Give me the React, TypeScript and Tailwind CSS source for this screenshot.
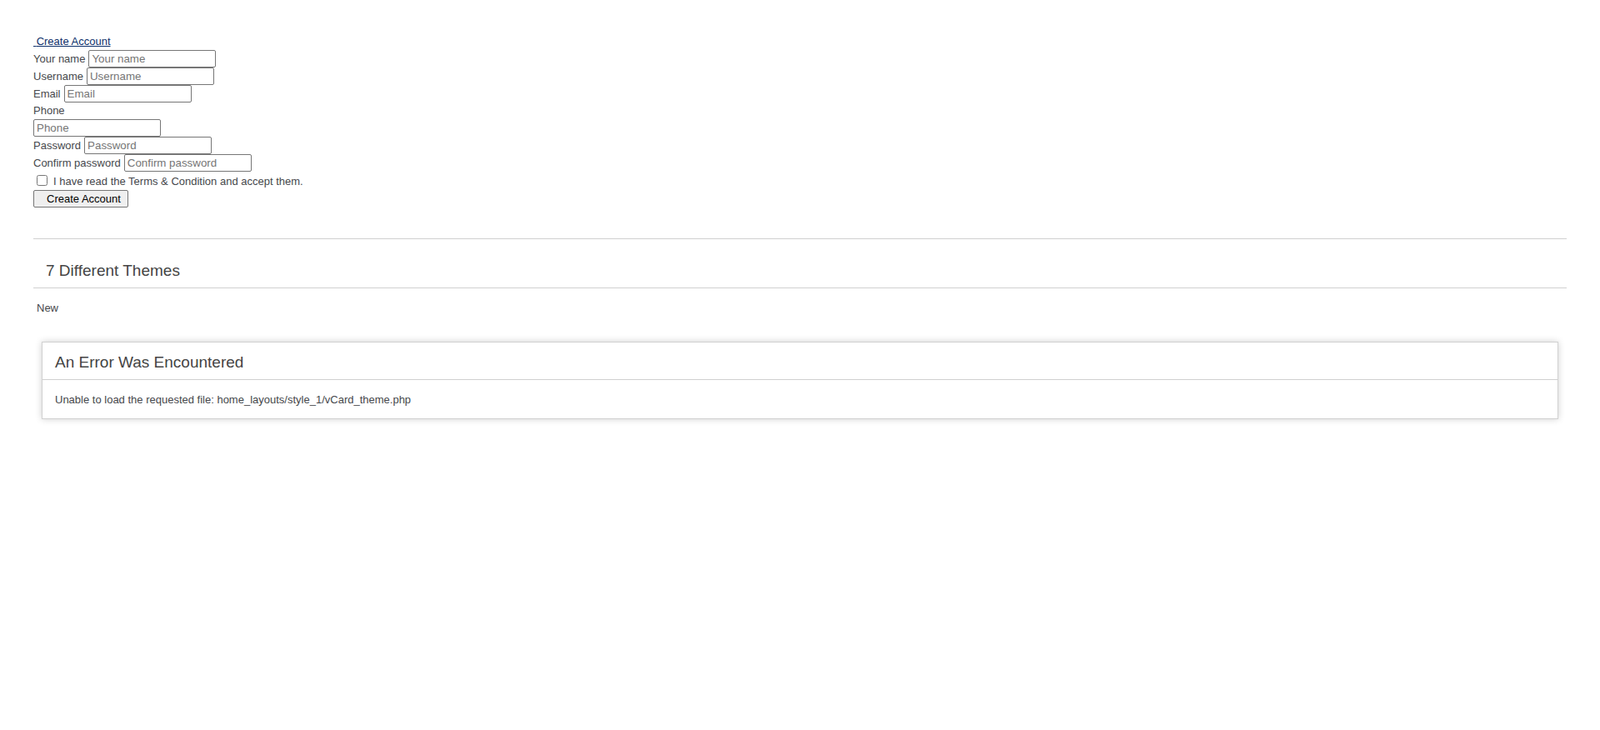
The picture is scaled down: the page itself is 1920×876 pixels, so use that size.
import React from "react";

interface FieldProps {
  label: string;
  stacked?: boolean;
}

const inputCls =
  "h-[21px] w-[153px] rounded-[2px] border border-[#767676] bg-white px-[3px] text-[13.33px] leading-[15px] text-black placeholder:text-[#757575] outline-none";

const Field: React.FC<FieldProps> = ({ label, stacked }) => {
  if (stacked) {
    return (
      <div>
        <div className="h-[20px]">
          <label>{label}</label>
        </div>
        <div className="flex h-[21px] items-center">
          <input type="text" placeholder={label} className={inputCls} />
        </div>
      </div>
    );
  }
  return (
    <div className="flex h-[21px] items-center gap-[4px]">
      <label>{label}</label>
      <input type="text" placeholder={label} className={inputCls} />
    </div>
  );
};

const fields: FieldProps[] = [
  { label: "Your name" },
  { label: "Username" },
  { label: "Email" },
  { label: "Phone", stacked: true },
  { label: "Password" },
  { label: "Confirm password" },
];

export default function App() {
  return (
    <div className="min-h-screen bg-white p-[40px] font-['Liberation_Sans',Helvetica,Arial,sans-serif] text-[13px] leading-[20px] text-[#45474b]">
      {/* signup form */}
      <form onSubmit={(e) => e.preventDefault()}>
        <div className="h-[20px]">
          <a href="#" className="font-normal text-[#0d2f6a] underline">
            {"\u00a0"}Create Account
          </a>
        </div>
        {fields.map((f) => (
          <Field key={f.label} {...f} />
        ))}
        <div className="flex h-[22px] items-start pt-[2px]">
          <input
            type="checkbox"
            className="ml-[4px] mr-[3px] mt-[2px] h-[13px] w-[13px]"
          />
          <span className="pl-[4px]">
            I have read the Terms &amp; Condition and accept them.
          </span>
        </div>
        <div>
          <button
            type="submit"
            className="h-[21px] w-[114px] rounded-[2px] border border-[#767676] bg-[#efefef] pl-[15px] text-left text-[13px] leading-[15px] text-black"
          >
            Create Account
          </button>
        </div>
      </form>

      <div className="mt-[37px] border-t border-[#d0d0d0]" />

      <h1 className="border-b border-[#d0d0d0] px-[15px] pb-[10px] pt-[28px] text-[19px] font-normal leading-[20px] text-[#444]">
        7 Different Themes
      </h1>

      <div className="mt-[14px] h-[20px] pl-[4px]">New</div>

      {/* error box */}
      <div className="mx-[10px] mt-[30px] border border-[#d0d0d0] shadow-[0_0_8px_#d0d0d0]">
        <h1 className="mb-[14px] border-b border-[#d0d0d0] px-[15px] pb-[10px] pt-[14px] text-[19px] font-normal leading-[20px] text-[#444]">
          An Error Was Encountered
        </h1>
        <p className="mx-[15px] mb-[12px]">
          Unable to load the requested file: home_layouts/style_1/vCard_theme.php
        </p>
      </div>
    </div>
  );
}
